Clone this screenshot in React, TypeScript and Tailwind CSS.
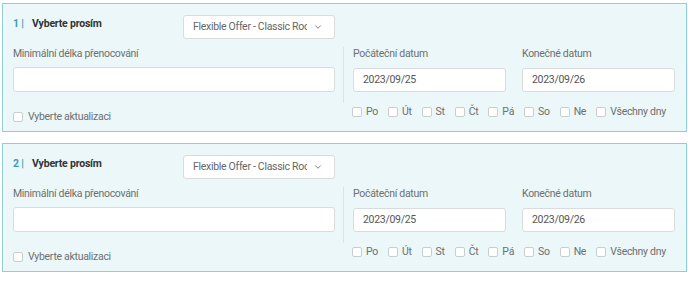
import { ChevronDown } from "lucide-react";

const days = ["Po", "Út", "St", "Čt", "Pá", "So", "Ne", "Všechny dny"];

function Box() {
    return <span className="inline-block w-[10px] h-[10px] rounded-[2px] border border-[#c9cfd1] bg-white shrink-0" />;
}

function Card({ index }: { index: number }) {
    return (
        <div className="border border-[#8fcfd3] bg-[#ebf7f8] pl-[10px] pr-[10px]">
            {/* Header */}
            <div className="flex h-[43px] pt-[11px]">
                <div className="w-[170px] pt-[2px] flex items-start text-[10.5px] leading-[14px] font-bold tracking-[-0.2px] whitespace-nowrap">
                    <span className="text-[#3d9fb2] w-[19px]">{index} |</span>
                    <span className="text-[#333]">Vyberte prosím</span>
                </div>
                <div className="w-[152px] h-[24px] bg-white border border-[#d9dcdd] rounded-[3px] flex items-center pl-[9px] pr-[11px]">
                    <span className="flex-1 overflow-hidden whitespace-nowrap text-[10.5px] tracking-[-0.3px] text-[#666]">
                        Flexible Offer - Classic Room
                    </span>
                    <ChevronDown className="w-[10px] h-[10px] text-[#666] ml-[6px]" strokeWidth={2} />
                </div>
            </div>

            {/* Body */}
            <div className="flex text-[10.5px] tracking-[-0.3px] text-[#6f6f6f] whitespace-nowrap">
                <div className="w-[322px] shrink-0 pb-[9px]">
                    <div className="leading-[14px]">Minimální délka přenocování</div>
                    <div className="mt-[6px] h-[25px] bg-white border border-[#d9dcdd] rounded-[3px]" />
                    <label className="mt-[20px] flex items-center gap-[5px] leading-[10px]">
                        <Box />
                        Vyberte aktualizaci
                    </label>
                </div>

                <div className="ml-[8px] flex-1 min-w-0">
                    <div className="border-l border-[#d9e4e6] pl-[9px] pb-[11px] flex gap-[16px]">
                        {[
                            ["Počáteční datum", "2023/09/25"],
                            ["Konečné datum", "2023/09/26"],
                        ].map(([label, value]) => (
                            <div key={label} className="w-[153px] shrink-0">
                                <div className="leading-[14px]">{label}</div>
                                <div className="mt-[7px] h-[24px] bg-white border border-[#d9dcdd] rounded-[3px] flex items-center pl-[9px] text-[#555]">
                                    {value}
                                </div>
                            </div>
                        ))}
                    </div>
                    <div className="mt-[4px] pl-[9px] flex items-center leading-[10px]">
                        {days.map((d) => (
                            <label key={d} className="flex items-center gap-[4px] mr-[10px] shrink-0">
                                <Box />
                                {d}
                            </label>
                        ))}
                    </div>
                </div>
            </div>
        </div>
    );
}

export default function App() {
    return (
        <div className="w-[688px] h-[281px] bg-white pt-[3px] pl-[2px] pr-[1px] flex flex-col gap-[11px] font-['Roboto',sans-serif]">
            <Card index={1} />
            <Card index={2} />
        </div>
    );
}
